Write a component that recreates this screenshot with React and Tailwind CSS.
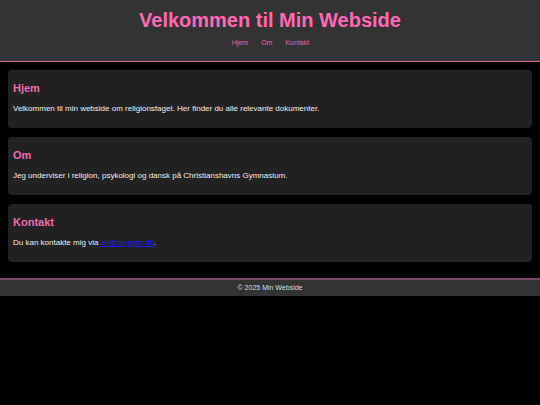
export default function App() {
  const sections = [
    {
      title: "Hjem",
      body: (
        <>Velkommen til min webside om religionsfaget. Her finder du alle relevante dokumenter.</>
      ),
    },
    {
      title: "Om",
      body: <>Jeg underviser i religion, psykologi og dansk på Christianshavns Gymnasium.</>,
    },
    {
      title: "Kontakt",
      body: (
        <>
          Du kan kontakte mig via{" "}
          <a href="#" className="text-[#1a1aff] underline">
            ali@cg-gym.dk
          </a>
          .
        </>
      ),
    },
  ];
  return (
    <div
      className="min-h-[405px] bg-black text-[#eeeeee]"
      style={{ fontFamily: '"Liberation Sans", Arial, sans-serif' }}
    >
      <header className="h-[61px] bg-[#333333] flex flex-col items-center">
        <h1 className="mt-[9px] text-[20px] leading-[23px] font-bold text-[#ff69b4]">
          Velkommen til Min Webside
        </h1>
        <nav className="mt-[6px] ml-[1px] flex gap-[13px] text-[7px] leading-[9px] text-[#e066a8]">
          <a href="#">Hjem</a>
          <a href="#">Om</a>
          <a href="#">Kontakt</a>
        </nav>
      </header>
      <div className="h-px bg-[#cc5f9c]" />
      <main className="px-[8px] pt-[8px] pb-[16px] flex flex-col gap-[9px]">
        {sections.map((s) => (
          <section
            key={s.title}
            className="bg-[#222222] rounded-[4px] px-[5px] pt-[12px] pb-[14px]"
          >
            <h2 className="text-[11px] leading-[13px] font-bold text-[#f06aae]">{s.title}</h2>
            <p className="mt-[9px] text-[8px] leading-[10px]">{s.body}</p>
          </section>
        ))}
      </main>
      <div className="h-[2px] bg-[#7f4565]" />
      <footer className="h-[16px] bg-[#333333] flex items-center justify-center text-[7px] text-[#dddddd]">
        © 2025 Min Webside
      </footer>
    </div>
  );
}
